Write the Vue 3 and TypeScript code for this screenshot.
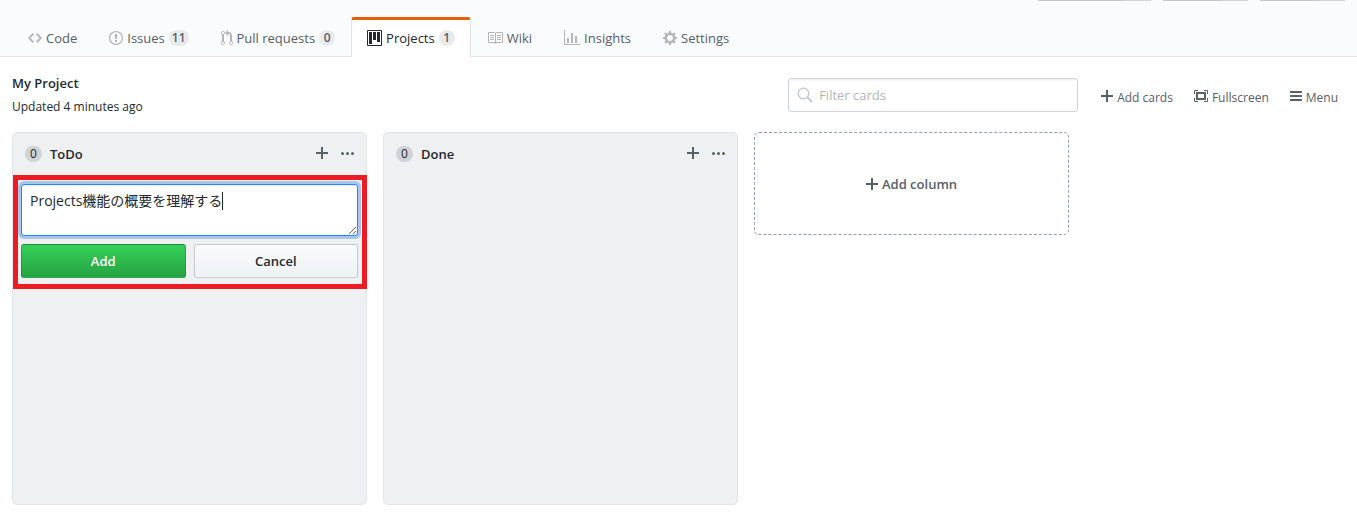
<script setup lang="ts">
import { ref } from 'vue'

interface Tab {
  label: string
  count?: number
  active?: boolean
  width: number
  path: string
}

interface Action {
  label: string
  width: number
  path: string
}

interface Column {
  title: string
  adding: boolean
}

const plusPath = 'M12 9H7v5H5V9H0V7h5V2h2v5h5z'

const tabs: Tab[] = [
  {
    label: 'Code',
    width: 14,
    path: 'M9.5 3L8 4.5 11.5 8 8 11.5 9.5 13 14 8 9.5 3zm-5 0L0 8l4.5 5L6 11.5 2.5 8 6 4.5 4.5 3z',
  },
  {
    label: 'Issues',
    count: 11,
    width: 14,
    path: 'M7 2.3c3.14 0 5.7 2.56 5.7 5.7s-2.56 5.7-5.7 5.7A5.71 5.71 0 0 1 1.3 8c0-3.14 2.56-5.7 5.7-5.7zM7 1C3.14 1 0 4.14 0 8s3.14 7 7 7 7-3.14 7-7-3.14-7-7-7zm1 3H6v5h2V4zm0 6H6v2h2v-2z',
  },
  {
    label: 'Pull requests',
    count: 0,
    width: 12,
    path: 'M11 11.28V5c-.03-.78-.34-1.47-.94-2.06C9.46 2.35 8.78 2.03 8 2H7V0L4 3l3 3V4h1c.27.02.48.11.69.31.21.2.3.42.31.69v6.28A1.993 1.993 0 0 0 10 15a1.993 1.993 0 0 0 1-3.72zm-1 2.92c-.66 0-1.2-.55-1.2-1.2 0-.65.55-1.2 1.2-1.2.65 0 1.2.55 1.2 1.2 0 .65-.55 1.2-1.2 1.2zM4 3c0-1.11-.89-2-2-2a1.993 1.993 0 0 0-1 3.72v6.56A1.993 1.993 0 0 0 2 15a1.993 1.993 0 0 0 1-3.72V4.72c.59-.34 1-.98 1-1.72zm-.8 10c0 .66-.55 1.2-1.2 1.2-.65 0-1.2-.55-1.2-1.2 0-.65.55-1.2 1.2-1.2.65 0 1.2.55 1.2 1.2zM2 4.2C1.34 4.2.8 3.65.8 3c0-.65.55-1.2 1.2-1.2.65 0 1.2.55 1.2 1.2 0 .65-.55 1.2-1.2 1.2z',
  },
  {
    label: 'Projects',
    count: 1,
    active: true,
    width: 15,
    path: 'M10 12h3V2h-3v10zm-4-2h3V2H6v8zm-4 4h3V2H2v12zm-1 1h13V1H1v14zM14 0H1a1 1 0 0 0-1 1v14a1 1 0 0 0 1 1h13a1 1 0 0 0 1-1V1a1 1 0 0 0-1-1z',
  },
  {
    label: 'Wiki',
    width: 16,
    path: 'M3 5h4v1H3V5zm0 3h4V7H3v1zm0 2h4V9H3v1zm11-5h-4v1h4V5zm0 2h-4v1h4V7zm0 2h-4v1h4V9zm2-6v9c0 .55-.45 1-1 1H9.5l-1 1-1-1H2c-.55 0-1-.45-1-1V3c0-.55.45-1 1-1h5.5l1 1 1-1H15c.55 0 1 .45 1 1zm-8 .5L7.5 3H2v9h6V3.5zm7-.5H9.5l-.5.5V12h6V3z',
  },
  {
    label: 'Insights',
    width: 16,
    path: 'M16 14v1H0V0h1v14h15zM5 13H3V8h2v5zm4 0H7V3h2v10zm4 0h-2V6h2v7z',
  },
  {
    label: 'Settings',
    width: 14,
    path: 'M14 8.77v-1.6l-1.94-.64-.45-1.09.88-1.84-1.13-1.13-1.81.91-1.09-.45-.69-1.92h-1.6l-.63 1.94-1.11.45-1.84-.88-1.13 1.13.91 1.81-.45 1.09L0 7.23v1.59l1.94.64.45 1.09-.88 1.84 1.13 1.13 1.81-.91 1.09.45.69 1.92h1.59l.63-1.94 1.11-.45 1.84.88 1.13-1.13-.92-1.81.47-1.09L14 8.75v.02zM7 11c-1.66 0-3-1.34-3-3s1.34-3 3-3 3 1.34 3 3-1.34 3-3 3z',
  },
]

const actions: Action[] = [
  { label: 'Add cards', width: 12, path: plusPath },
  {
    label: 'Fullscreen',
    width: 14,
    path: 'M13 10h1v3c0 .547-.453 1-1 1h-3v-1h3v-3zM1 10H0v3c0 .547.453 1 1 1h3v-1H1v-3zm0-7h3V2H1c-.547 0-1 .453-1 1v3h1V3zm1 1h10v8H2V4zm2 6h6V6H4v4zm6-8v1h3v3h1V3c0-.547-.453-1-1-1h-3z',
  },
  {
    label: 'Menu',
    width: 12,
    path: 'M11.41 9H.59C0 9 0 8.59 0 8c0-.59 0-1 .59-1H11.4c.59 0 .59.41.59 1 0 .59 0 1-.59 1h.01zm0-4H.59C0 5 0 4.59 0 4c0-.59 0-1 .59-1H11.4c.59 0 .59.41.59 1 0 .59 0 1-.59 1h.01zM.59 11H11.4c.59 0 .59.41.59 1 0 .59 0 1-.59 1H.59C0 13 0 12.59 0 12c0-.59 0-1 .59-1z',
  },
]

const columns: Column[] = [
  { title: 'ToDo', adding: true },
  { title: 'Done', adding: false },
]

const filter = ref('')
const note = ref('Projects機能の概要を理解する')
</script>

<template>
  <div class="page">
    <header class="repo-head">
      <div class="social" aria-hidden="true">
        <span class="social-group watch"></span>
        <span class="social-group"></span>
        <span class="social-group"></span>
      </div>
      <nav class="tabs" aria-label="Repository">
        <a v-for="tab in tabs" :key="tab.label" href="#" class="tab" :class="{ active: tab.active }">
          <svg class="icon" :width="tab.width" height="16" :viewBox="`0 0 ${tab.width} 16`" aria-hidden="true">
            <path fill-rule="evenodd" :d="tab.path" />
          </svg>
          <span>{{ tab.label }}</span>
          <span v-if="tab.count !== undefined" class="counter">{{ tab.count }}</span>
        </a>
      </nav>
    </header>

    <div class="project-head">
      <div class="project-name">
        <h1>My Project</h1>
        <p>Updated 4 minutes ago</p>
      </div>
      <label class="filter">
        <svg class="filter-icon" width="16" height="16" viewBox="0 0 16 16" aria-hidden="true">
          <circle cx="6.5" cy="6.5" r="5.3" fill="none" stroke="currentColor" stroke-width="1.3" />
          <path d="M10.6 10.6L15 15" fill="none" stroke="currentColor" stroke-width="2" />
        </svg>
        <input v-model="filter" type="text" placeholder="Filter cards" aria-label="Filter cards" />
      </label>
      <div class="actions">
        <button v-for="action in actions" :key="action.label" type="button" class="action">
          <svg class="icon" :width="action.width" height="16" :viewBox="`0 0 ${action.width} 16`" aria-hidden="true">
            <path fill-rule="evenodd" :d="action.path" />
          </svg>
          <span>{{ action.label }}</span>
        </button>
      </div>
    </div>

    <main class="board">
      <section v-for="column in columns" :key="column.title" class="column">
        <div class="column-head">
          <span class="counter dark">0</span>
          <h2>{{ column.title }}</h2>
          <button type="button" class="icon-button" aria-label="Add a note">
            <svg class="icon" width="12" height="16" viewBox="0 0 12 16" aria-hidden="true">
              <path :d="plusPath" />
            </svg>
          </button>
          <button type="button" class="icon-button" aria-label="Column menu">
            <svg class="icon" width="13" height="16" viewBox="0 0 13 16" aria-hidden="true">
              <circle cx="1.5" cy="8.5" r="1.5" />
              <circle cx="6.5" cy="8.5" r="1.5" />
              <circle cx="11.5" cy="8.5" r="1.5" />
            </svg>
          </button>
        </div>
        <form v-if="column.adding" class="note-form" @submit.prevent>
          <div class="note-box">
            <textarea v-model="note" aria-label="Note" spellcheck="false"></textarea>
            <div class="caret-line" aria-hidden="true"><span class="caret-offset">{{ note }}</span><span class="caret"></span></div>
          </div>
          <div class="note-buttons">
            <button type="submit" class="btn primary">Add</button>
            <button type="button" class="btn">Cancel</button>
          </div>
        </form>
      </section>
      <button type="button" class="add-column">
        <svg class="icon" width="12" height="16" viewBox="0 0 12 16" aria-hidden="true">
          <path :d="plusPath" />
        </svg>
        <span>Add column</span>
      </button>
    </main>
  </div>
</template>

<style>
body {
  margin: 0;
  background: #fff;
}
</style>

<style scoped>
.page {
  display: flex;
  flex-direction: column;
  box-sizing: border-box;
  min-height: 100vh;
  padding-bottom: 10px;
  color: #24292e;
  font-family: "Open Sans", "Noto Sans CJK JP", sans-serif;
  font-size: 13px;
  line-height: 20px;
}

h1,
h2,
p {
  margin: 0;
}

button,
input,
textarea {
  box-sizing: border-box;
  margin: 0;
  font: inherit;
  color: inherit;
}

.icon {
  flex: none;
  fill: currentColor;
}

.repo-head {
  background: #fafbfc;
  border-bottom: 1px solid #e1e4e8;
}

.social {
  display: flex;
  justify-content: flex-end;
  gap: 12px;
  padding: 0 12px 16px;
}

.social-group {
  width: 85px;
  height: 1px;
  background: linear-gradient(to right, #c5c7cb 69%, #d1d3d6 69%);
}

.social-group.watch {
  width: 113px;
  background: linear-gradient(to right, #c5c7cb 76%, #d1d3d6 76%);
}

.tabs {
  display: flex;
  padding: 0 12px;
  margin-bottom: -1px;
}

.tab {
  display: flex;
  align-items: center;
  gap: 4px;
  box-sizing: border-box;
  height: 40px;
  padding: 3px 15px 1px;
  border: solid transparent;
  border-width: 0 1px;
  color: #586069;
  text-decoration: none;
  white-space: nowrap;
}

.tab .icon {
  color: #b4b7ba;
}

.tab.active {
  padding-top: 0;
  border-top: 3px solid #e36209;
  border-right-color: #e1e4e8;
  border-left-color: #e1e4e8;
  border-radius: 3px 3px 0 0;
  background: #fff;
  color: #24292e;
}

.tab.active .icon {
  color: #24292e;
}

.counter {
  box-sizing: border-box;
  min-width: 16px;
  padding: 0 3px;
  border-radius: 20px;
  background: #e9eaec;
  color: #586069;
  font-size: 12px;
  font-weight: 600;
  line-height: 16px;
  text-align: center;
}

.counter.dark {
  min-width: 17px;
  background: #d0d3d6;
  color: #24292e;
  font-weight: 500;
}

.project-head {
  display: flex;
  align-items: center;
  padding: 16px 19px 15px 12px;
}

.project-name {
  flex: 1;
}

.project-name h1 {
  font-size: 13px;
  font-weight: 600;
  line-height: 20px;
}

.project-name p {
  padding-top: 4px;
  font-size: 12px;
  line-height: 20px;
}

.filter {
  display: flex;
  align-items: center;
  gap: 6px;
  box-sizing: border-box;
  width: 290px;
  height: 34px;
  padding: 0 8px;
  border: 1px solid #d1d5da;
  border-radius: 3px;
  box-shadow: inset 0 1px 2px rgba(27, 31, 35, 0.075);
}

.filter-icon {
  color: #c3c7cc;
}

.filter input {
  flex: 1;
  min-width: 0;
  padding: 0;
  border: 0;
  outline: 0;
  background: transparent;
}

.filter input::placeholder {
  color: #b1b6bc;
  opacity: 1;
}

.actions {
  display: flex;
  gap: 21px;
  padding: 6px 0 0 23px;
}

.action,
.icon-button {
  display: flex;
  gap: 4px;
  padding: 0;
  border: 0;
  background: transparent;
  color: #586069;
  font-size: 12px;
}

.action {
  align-items: flex-start;
}

.board {
  display: flex;
  flex: 1;
  align-items: stretch;
  gap: 16px;
  padding: 0 12px;
}

.column {
  box-sizing: border-box;
  width: 355px;
  border: 1px solid #e1e4e8;
  border-radius: 5px;
  background: #eff0f2;
}

.column-head {
  display: flex;
  align-items: center;
  height: 42px;
  padding: 0 12px;
}

.column-head h2 {
  flex: 1;
  padding-left: 8px;
  font-size: 13px;
  font-weight: 600;
}

.column-head .icon-button {
  padding-bottom: 2px;
}

.column-head .icon-button + .icon-button {
  margin-left: 13px;
}

.note-form {
  margin-right: -1px;
  padding: 4px 4px 6px 3px;
  border: 5px solid #ed1c24;
}

.note-box {
  position: relative;
  display: flex;
  font-size: 14px;
}

.note-box textarea {
  width: 100%;
  height: 52px;
  padding: 6px 8px;
  border: 1px solid #2188ff;
  border-radius: 3px;
  outline: 0;
  background: #fff;
  box-shadow: inset 0 1px 2px rgba(27, 31, 35, 0.075), 0 0 0 3px rgba(3, 102, 214, 0.3);
  resize: vertical;
}

.caret-line {
  position: absolute;
  top: 8px;
  left: 9px;
  display: flex;
  pointer-events: none;
}

.caret-offset {
  visibility: hidden;
}

.caret {
  width: 1px;
  height: 18px;
  background: #24292e;
}

.note-buttons {
  display: flex;
  gap: 8px;
  padding-top: 8px;
}

.btn {
  flex: 1;
  height: 34px;
  padding: 0;
  border: 1px solid rgba(27, 31, 35, 0.2);
  border-radius: 3px;
  background: linear-gradient(#fafbfc, #eff3f6 90%);
  font-weight: 600;
}

.btn.primary {
  background: linear-gradient(#34d058, #28a745 90%);
  color: #fff;
}

.add-column {
  display: flex;
  align-items: center;
  justify-content: center;
  align-self: flex-start;
  gap: 4px;
  width: 315px;
  height: 103px;
  border: 1px dashed #959da5;
  border-radius: 5px;
  background: transparent;
  color: #586069;
  font-weight: 600;
}
</style>
